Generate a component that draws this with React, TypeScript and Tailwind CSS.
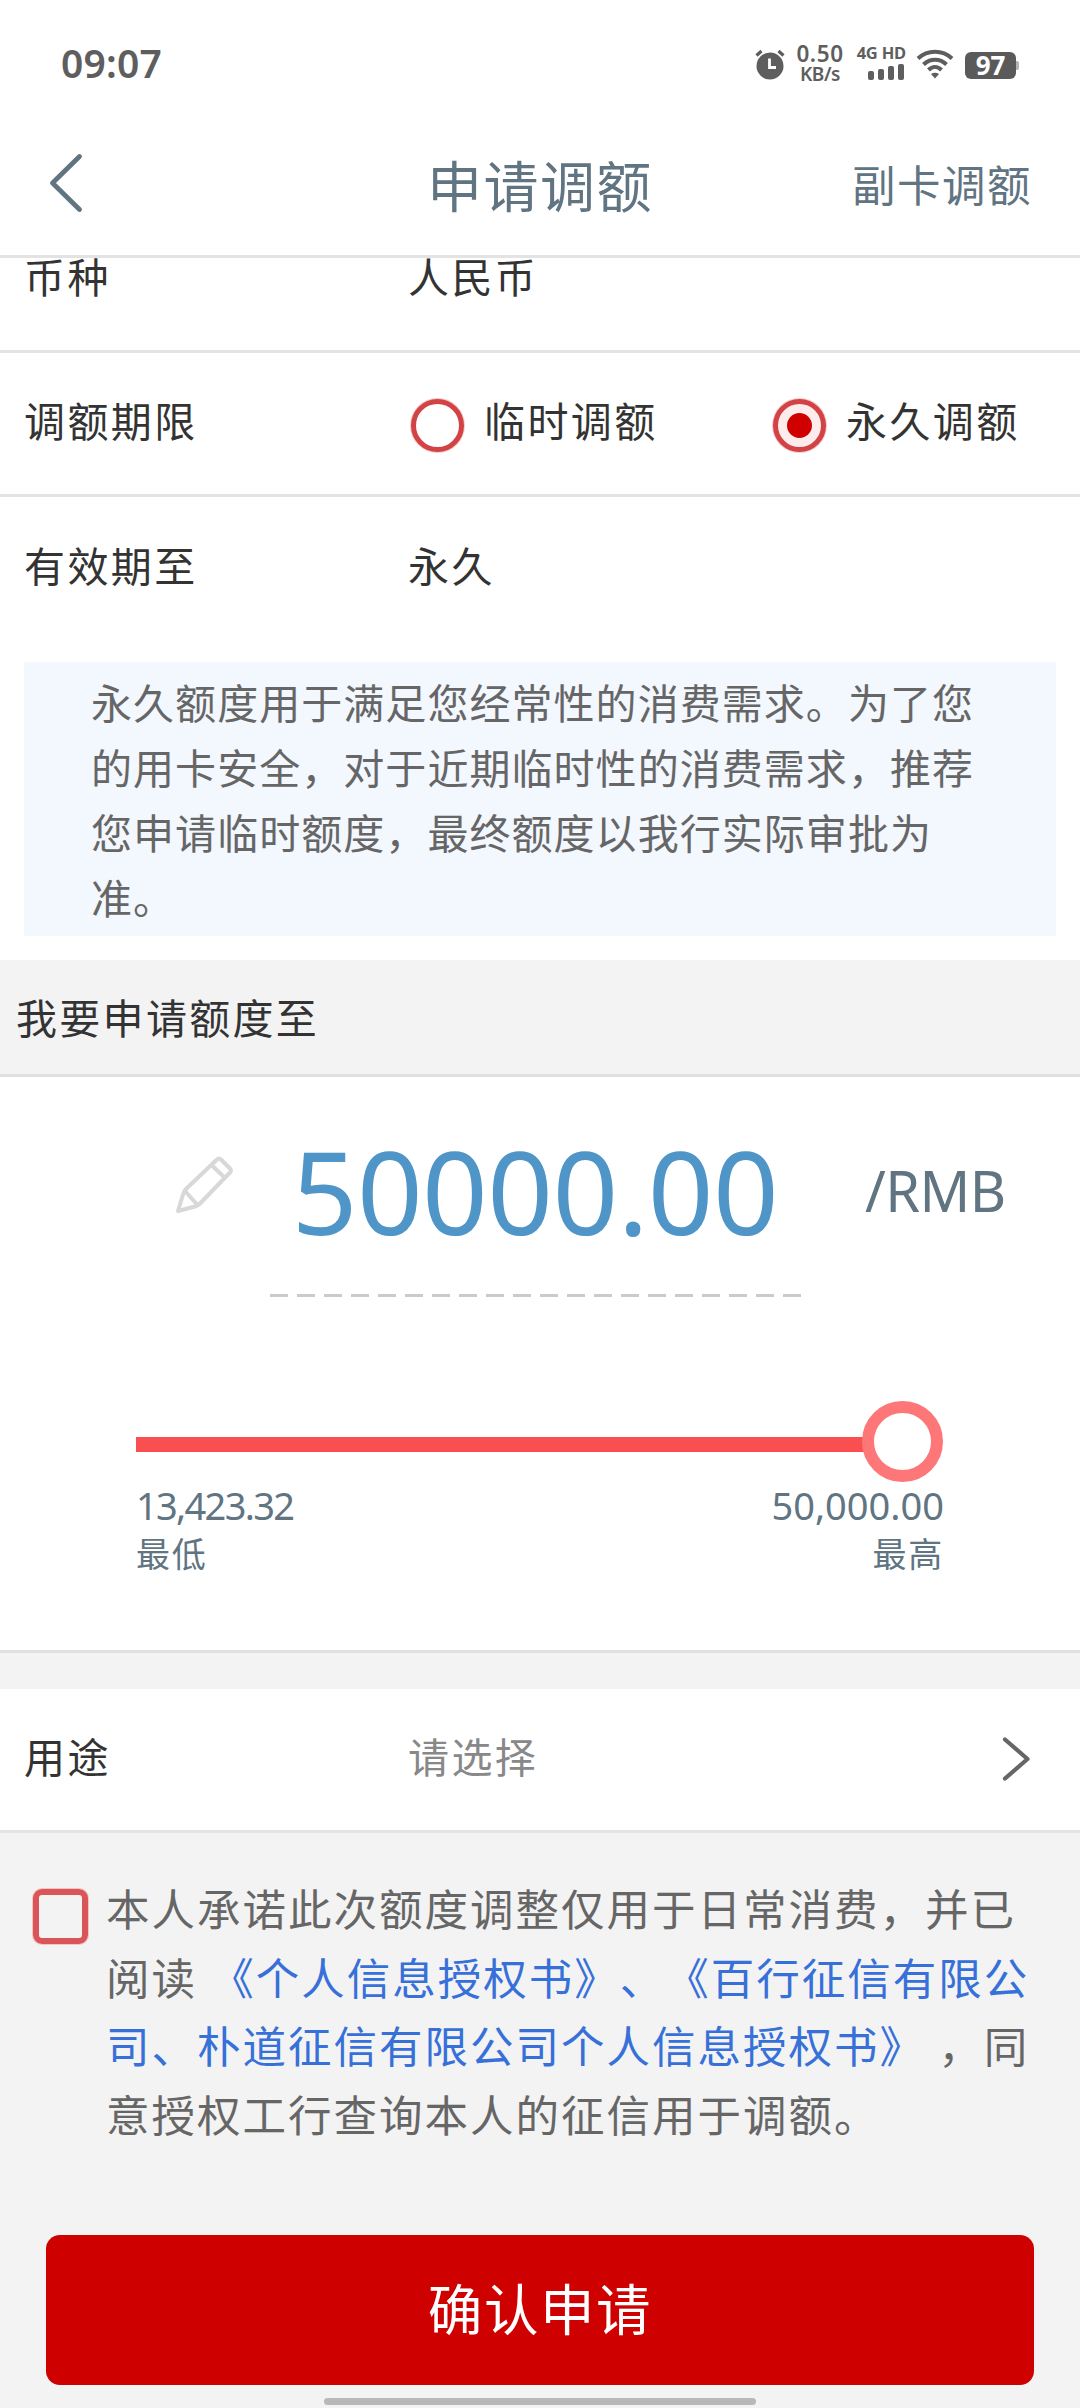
import React, { useState } from 'react';

const periods = [
  { id: 'temp', label: '临时调额' },
  { id: 'forever', label: '永久调额' },
];

const signalBars = ['h-[9px]', 'h-[11px]', 'h-[14px]', 'h-4'];

const StatusBar: React.FC = () => (
  <div className="flex h-[124px] items-start justify-between pl-[61px] pr-[61px] pt-[45px] text-[#5e5e5e]">
    <span className="mt-[-2px] text-[39px] font-semibold leading-[40px] tracking-[0.2px]">09:07</span>
    <div className="flex h-[36px] items-start">
      <svg className="mt-[4px] h-[31px] w-[30px]" viewBox="0 0 30 31" fill="none">
        <circle cx="15" cy="17" r="13.5" fill="#5e5e5e" />
        <path d="M1.5 6.5 L6.5 2 M28.5 6.5 L23.5 2" stroke="#5e5e5e" strokeWidth="3.2" />
        <path d="M14.5 9.5 V18.5 H21" stroke="#fff" strokeWidth="2.8" />
      </svg>
      <div className="ml-[10px] mt-[-2px] flex w-[50px] flex-col items-center">
        <span className="text-[22.5px] font-semibold leading-[22px] tracking-[0.6px]">0.50</span>
        <span className="text-[19px] font-semibold leading-[18px] tracking-[-0.4px]">KB/s</span>
      </div>
      <div className="ml-[11px] flex w-[50px] flex-col items-end">
        <span className="whitespace-nowrap text-[16.5px] font-bold leading-[16px] tracking-[-0.2px]">4G HD</span>
        <div className="mr-[2px] mt-[3px] flex h-4 items-end gap-[4px]">
          {signalBars.map(h => (
            <span key={h} className={`w-[6px] rounded-[2px] bg-[#5e5e5e] ${h}`} />
          ))}
        </div>
      </div>
      <svg className="ml-[10px] mt-[4px] h-[30px] w-[38px]" viewBox="0 0 38 30" fill="none" stroke="#5e5e5e" strokeWidth="4">
        <path d="M2 9.5 C11.5 0.5 26.5 0.5 36 9.5" />
        <path d="M7.5 15.5 C14 9 24 9 30.5 15.5" />
        <path d="M12.5 21 C16.5 17 21.5 17 25.5 21" />
        <path d="M15 25 Q19 22.5 23 25 L19 29.5 Z" fill="#5e5e5e" stroke="none" />
      </svg>
      <div className="ml-[11px] mt-[7px] flex items-center">
        <div className="flex h-[27px] w-[51px] items-center justify-center rounded-[6px] bg-[#5a5a5a] text-[26px] font-bold leading-[27px] text-white">
          97
        </div>
        <span className="h-[9px] w-[3px] rounded-r-[2px] bg-[#b4b4b4]" />
      </div>
    </div>
  </div>
);

const Row: React.FC<{ label: string; children: React.ReactNode; border?: boolean }> = ({ label, children, border = true }) => (
  <div className={`flex h-[144px] shrink-0 items-center pb-[4px] pl-[24px] text-[41px] tracking-[2.4px] text-[#333] ${border ? 'border-b-[3px] border-[#e3e3e3]' : ''}`}>
    <span className="w-[384px] shrink-0">{label}</span>
    {children}
  </div>
);

const App: React.FC = () => {
  const [period, setPeriod] = useState('forever');
  const [agreed, setAgreed] = useState(false);

  return (
    <div className="flex h-[2408px] w-[1080px] flex-col overflow-hidden whitespace-nowrap bg-white font-['Noto_Sans','Noto_Sans_CJK_SC',sans-serif] [text-spacing-trim:space-all]">
      <StatusBar />

      <header className="grid h-[134px] shrink-0 grid-cols-[1fr_auto_1fr] items-center border-b-[3px] border-[#e3e3e3] pb-[8px] text-[#607482]">
        <svg className="mb-[6px] ml-[48px] h-[60px] w-[36px]" viewBox="0 0 36 60" fill="none" stroke="currentColor" strokeWidth="4.8" strokeLinecap="round" strokeLinejoin="round">
          <path d="M31.5 3.5 L4.5 30 L31.5 56.5" />
        </svg>
        <h1 className="text-[55px] leading-[80px] tracking-[1.5px]">申请调额</h1>
        <a className="justify-self-end pb-px pr-[48px] text-[43.5px] leading-[64px] tracking-[1.5px]">副卡调额</a>
      </header>

      {/* first row is partly scrolled under the header */}
      <div className="flex h-[95px] shrink-0 flex-col justify-end overflow-hidden">
        <Row label="币种">人民币</Row>
      </div>
      <Row label="调额期限">
        {periods.map(p => (
          <button key={p.id} onClick={() => setPeriod(p.id)} className="flex w-[362px] shrink-0 items-center pl-[3px] tracking-[2.4px]">
            <span
              className={`mt-[7px] flex h-[53px] w-[53px] shrink-0 items-center justify-center rounded-full border-[5px] border-[#d24346] ring-1 ring-[#f6c9ca] ${
                period === p.id ? 'bg-[#fdecec]' : 'bg-white'
              }`}
            >
              {period === p.id && <span className="h-[25px] w-[25px] rounded-full bg-[#d00000]" />}
            </span>
            <span className="ml-[20px]">{p.label}</span>
          </button>
        ))}
      </Row>
      <Row label="有效期至" border={false}>永久</Row>

      <p className="mx-[24px] mt-[21px] h-[274px] shrink-0 bg-[#f3f7fe] pl-[67px] pt-[9px] text-[41px] leading-[65px] tracking-[1.05px] text-[#666]">
        永久额度用于满足您经常性的消费需求。为了您<br />
        的用卡安全，对于近期临时性的消费需求，推荐<br />
        您申请临时额度，最终额度以我行实际审批为<br />
        准。
      </p>

      <h2 className="mt-[24px] flex h-[117px] shrink-0 items-center border-b-[3px] border-[#e0e0e0] bg-[#f3f3f3] pl-[16px] pt-[3px] text-[41px] tracking-[2.3px] text-[#333]">
        我要申请额度至
      </h2>

      <section className="h-[576px] shrink-0 border-b-[3px] border-[#e0e0e0] text-[#607482]">
        <div className="flex h-[217px] pl-[174px]">
          <svg className="mt-[77px] h-[60px] w-[60px]" viewBox="0 0 60 60" fill="none" stroke="#d8d8d8" strokeWidth="4" strokeLinecap="round" strokeLinejoin="round">
            <path d="M43 5.5 Q45 3.5 47 5.5 L56 14.5 Q58 16.5 56 18.5 L26 49.5 Q24 51.5 21 52.5 L4 57 L9 40.5 Q10 37 12.5 34.5 Z" />
            <path d="M37.5 11 L49.5 22.5 M11 37 L23.500 51" />
          </svg>
          <div className="ml-[36px] h-full w-[532px]">
            <div className="pr-[2px] pt-[39px] text-center text-[115px] leading-[150px] tracking-[-0.6px] text-[#4f95c8]">50000.00</div>
            <svg className="mt-[28px] h-[3px] w-[532px]" viewBox="0 0 532 3">
              <path d="M0 1.5 H532" stroke="#cbcbcb" strokeWidth="3" strokeDasharray="18 9" />
            </svg>
          </div>
          <span className="ml-[63px] pt-[73px] text-[56px] leading-[80px] tracking-[-0.6px]">/RMB</span>
        </div>

        <div className="mx-[136px] mt-[107px] flex h-[81px] items-center">
          <span className="mt-[6px] h-[15px] w-[728px] bg-[#fa4f50]" />
          <span className="-ml-[2px] h-[81px] w-[81px] rounded-full border-[12px] border-[#fd7779] bg-white" />
        </div>
        <div className="mx-[136px] flex justify-between text-[38px]">
          <div>
            <div className="leading-[46px] tracking-[-1.7px]">13,423.32</div>
            <div className="pt-px text-[34px] leading-[50px] tracking-[1.8px]">最低</div>
          </div>
          <div className="text-right">
            <div className="leading-[46px]">50,000.00</div>
            <div className="pt-px text-[34px] leading-[50px] tracking-[1.8px]">最高</div>
          </div>
        </div>
      </section>

      <main className="flex flex-1 flex-col bg-[#f3f3f3] pt-[36px]">
        <div className="bg-white">
          <Row label="用途">
            <span className="text-[#888]">请选择</span>
            <svg className="ml-auto mr-[49px] mt-[2px] h-[46px] w-[29px]" viewBox="0 0 29 46" fill="none" stroke="#666" strokeWidth="4.2" strokeLinecap="round" strokeLinejoin="round">
              <path d="M3 3.5 L25.5 23 L3 42.5" />
            </svg>
          </Row>
        </div>

        <div className="mt-[42px] flex pl-[33px]">
          <button
            onClick={() => setAgreed(!agreed)}
            className={`mt-[14px] h-[55px] w-[55px] shrink-0 rounded-[9px] border-[6px] border-[#d95558] ring-1 ring-[#f3c4c5] ${agreed ? 'bg-[#d00000]' : ''}`}
          />
          <p className="ml-[18px] text-[43.5px] leading-[68.5px] tracking-[2px] text-[#666]">
            本人承诺此次额度调整仅用于日常消费，并已<br />
            阅读 <a className="text-[#3770d8]">《个人信息授权书》、《百行征信有限公<br />
            司、朴道征信有限公司个人信息授权书》</a> ，同<br />
            意授权工行查询本人的征信用于调额。
          </p>
        </div>

        <button className="mx-[46px] mt-[86px] h-[150px] rounded-[14px] bg-[#ce0000] text-[54.5px] tracking-[1.6px] text-white">
          确认申请
        </button>
        <div className="mx-auto mt-[13px] h-[7px] w-[432px] rounded-full bg-[#b8b8b8]" />
      </main>
    </div>
  );
};

export default App;
